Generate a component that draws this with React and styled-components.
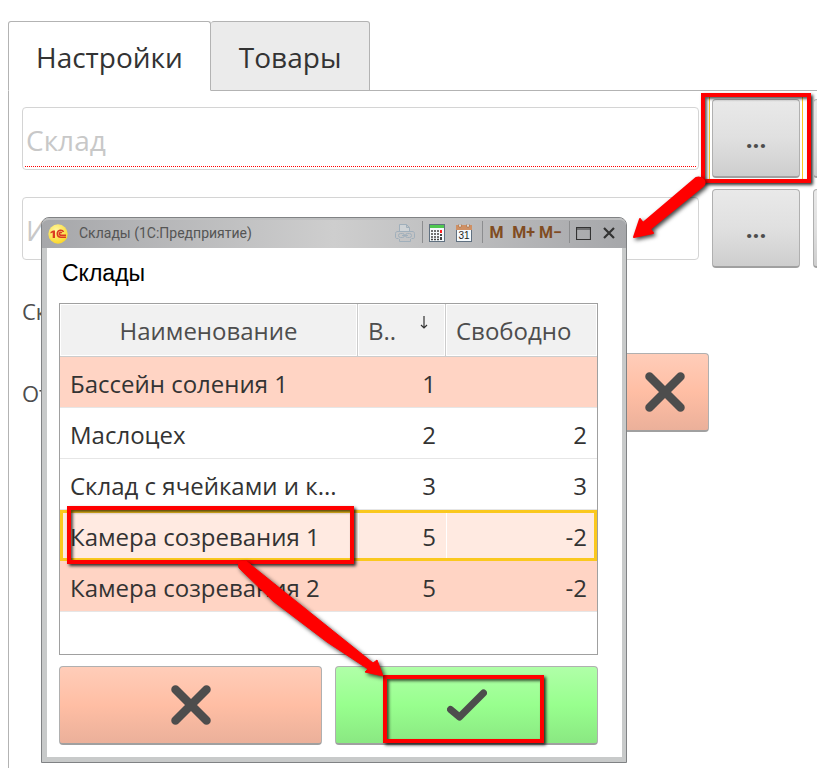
import React from "react";
import styled, { createGlobalStyle, css } from "styled-components";

const Global = createGlobalStyle`
  *, *::before, *::after { box-sizing: border-box; }
  body { margin: 0; background: #fff; color: #333; font-family: "Open Sans", "Noto Sans", sans-serif; }
  button, input { font: inherit; color: inherit; }
  button { padding: 0; cursor: pointer; }
`;

const Page = styled.main`
  position: relative;
  min-height: 100vh;
  padding: 21px 0 0 8px;
  display: flex;
  flex-direction: column;
  overflow: hidden;
`;

const Tabs = styled.div`
  display: flex;
  &::after {
    content: "";
    flex: 1;
    border-bottom: 1px solid #b3b3b3;
  }
`;

const Tab = styled.button`
  height: 70px;
  padding: 2px 27px 0;
  font-size: 28px;
  line-height: 38px;
  border: 1px solid #b3b3b3;
  border-radius: 3px 3px 0 0;
  background: #ebebeb;
  & + & {
    padding: 2px 28px 0;
    border-left: 0;
  }
  ${(p) => p.$active && css`
    background: #fff;
    border-bottom-color: #fff;
  `}
`;

const Panel = styled.section`
  flex: 1;
  display: flex;
  flex-direction: column;
  gap: 11px;
  padding: 8px 0 0 13px;
  border-left: 1px solid #b3b3b3;
`;

const FormRow = styled.div`
  display: flex;
  align-items: center;
  gap: 13px;
  min-height: ${(p) => (p.$compact ? 63 : 79)}px;
  margin-right: ${(p) => (p.$bleed ? -84 : 0)}px;
`;

const FieldFrame = styled.label`
  flex: 1;
  min-width: 0;
  height: 63px;
  padding: 3px 2px 2px;
  display: flex;
  border: 1px solid #d4d4d4;
  border-radius: 4px;
`;

const Field = styled.input`
  width: 100%;
  padding: 2px 0 0 1px;
  font-size: 28px;
  border: 0;
  border-bottom: 1px dotted ${(p) => (p.$required ? "#f00" : "transparent")};
  outline: 0;
  background: transparent;
  &::placeholder { color: #c8c8c8; opacity: 1; }
`;

const RowLabel = styled.span`
  flex: 1;
  font-size: 22px;
  line-height: 30px;
  color: #4d4d4d;
`;

const tones = {
  grey: "linear-gradient(#e9e9e9, #e0e0e0 50%, #cecece)",
  red: "linear-gradient(#ffcdb9, #ffbea4 50%, #ebb09a)",
  green: "linear-gradient(#b0ffa8, #98ff8e 50%, #8ae882)",
};

const Button = styled.button`
  position: relative;
  flex: ${(p) => (p.$fill ? "1" : "0 0 88px")};
  height: 79px;
  display: flex;
  align-items: center;
  justify-content: center;
  font-size: 24px;
  font-weight: 700;
  color: #4d4d4d;
  border: 1px solid #b0b0b0;
  border-bottom: 2px solid #a0a0a0;
  border-radius: 4px;
  background: ${(p) => tones[p.$tone || "grey"]};
  margin-right: ${(p) => (p.$inset ? 108 : 0)}px;
`;

const FocusEdges = styled.span`
  position: absolute;
  inset: -4px;
  border: solid #fac81e;
  border-width: 0 1px;
`;

const Highlight = styled.span`
  position: absolute;
  inset: ${(p) => p.$inset};
  border: 4px solid #f00;
  box-shadow: 2px 2px 3px rgba(0, 0, 0, 0.8), inset 2px 2px 3px rgba(0, 0, 0, 0.65);
  pointer-events: none;
`;

const Arrow = styled.svg`
  position: absolute;
  left: ${(p) => p.$left}px;
  top: ${(p) => p.$top}px;
  overflow: visible;
  pointer-events: none;
  filter: drop-shadow(2px 2px 2px rgba(0, 0, 0, 0.75));
`;

const Dialog = styled.section`
  position: absolute;
  left: 41px;
  top: 217px;
  width: 586px;
  border: 1px solid #808284;
  border-radius: 8px 8px 0 0;
  background: #c8caca;
  padding: 0 4px 5px 5px;
`;

const TitleBar = styled.header`
  height: 30px;
  margin: 0 -4px 0 -5px;
  padding: 0 5px 0 6px;
  display: flex;
  align-items: center;
  border-top: 2px solid #bfc0c1;
  border-radius: 7px 7px 0 0;
  background: linear-gradient(90deg, #a6a7aa, #cecece 50%, #a6a7aa);
`;

const Title = styled.h1`
  flex: 1;
  margin: 0 0 3px 11px;
  font: 14px/18px Roboto, "Liberation Sans", sans-serif;
  color: #555;
`;

const Tool = styled.button`
  width: ${(p) => p.$w || 27}px;
  height: 26px;
  display: flex;
  align-items: center;
  justify-content: center;
  border: 0;
  background: none;
  margin-bottom: 2px;
  font: 700 16px/20px Roboto, "Liberation Sans", sans-serif;
  color: #804c22;
`;

const Divider = styled.span`
  width: 1px;
  height: 22px;
  margin: 0 0 4px ${(p) => (p.$spaced ? 5 : 0)}px;
  background: #8c8d8f;
`;

const DialogBody = styled.div`
  padding: 11px 24px 12px 12px;
  background: #fff;
`;

const Heading = styled.h2`
  margin: 0 0 16px 3px;
  font: 23px/28px "Liberation Sans", Arial, sans-serif;
  color: #000;
`;

const TableFrame = styled.div`
  position: relative;
  height: 352px;
  border: 1px solid #a0a0a0;
`;

const Table = styled.table`
  width: 100%;
  table-layout: fixed;
  border-collapse: separate;
  border-spacing: 0;
  font-size: 24px;
  line-height: 34px;
`;

const Head = styled.th`
  position: relative;
  height: 53px;
  padding: 1px 10px 0;
  font-weight: 400;
  text-align: ${(p) => p.$align || "left"};
  color: #4d4d4d;
  background: #f1f1f1;
  border-right: 1px solid #ccc;
  border-bottom: 1px solid #ccc;
  box-shadow: inset 0 0 0 1px #fff;
  &:last-child { border-right: 0; }
`;

const SortIcon = styled.svg`
  position: absolute;
  right: 17px;
  top: 12px;
`;

const Cell = styled.td`
  height: 51px;
  padding: 3px 10px 0;
  text-align: ${(p) => (p.$num ? "right" : "left")};
  white-space: nowrap;
  overflow: hidden;
  text-overflow: ellipsis;
  border-bottom: 1px solid #e6e6e6;
`;

const Row = styled.tr`
  background: ${(p) => (p.$selected ? "#ffeae1" : p.$warn ? "#ffd4c4" : "#fff")};
  ${(p) => p.$selected && css`
    outline: 3px solid #fac81e;
    outline-offset: -3px;
    ${Cell} + ${Cell} { border-left: 1px solid #fff; }
  `}
`;

const Actions = styled.footer`
  display: flex;
  gap: 13px;
  margin-top: 11px;
`;

const Cross = () => (
  <svg width="40" height="40" viewBox="0 0 40 40" aria-hidden="true">
    <path d="M4.500 4.500 35.500 35.500M35.500 4.500 4.500 35.500" stroke="#4d4d4d" strokeWidth="8.500" strokeLinecap="round" />
  </svg>
);

const Check = () => (
  <svg width="40" height="32" viewBox="0 0 40 32" aria-hidden="true">
    <path d="M3.500 20.500 12.500 28 36.500 4" fill="none" stroke="#4d4d4d" strokeWidth="7" strokeLinecap="round" strokeLinejoin="round" />
  </svg>
);

const Logo = () => (
  <svg width="20" height="20" viewBox="0 0 20 20" aria-hidden="true">
    <defs>
      <radialGradient id="gold" cx="0.4" cy="0.3" r="0.7">
        <stop offset="0" stopColor="#fff7a0" />
        <stop offset="1" stopColor="#fbd72b" />
      </radialGradient>
    </defs>
    <circle cx="10" cy="10" r="9.700" fill="url(#gold)" />
    <path d="M2.500 8 5 6.500H7V14H4.700V8.500L2.500 9.500Z" fill="#dc3a20" />
    <path d="M15.500 8C14.500 5.500 9.500 5.500 9.300 9.500 9.300 12.500 11 13.200 13 13.200H18M13.800 9C12.500 7.800 11.400 8.500 11.400 9.800 11.400 11 12.300 11.300 13.300 11.300H18" fill="none" stroke="#dc3a20" strokeWidth="1.600" />
  </svg>
);

const Printer = () => (
  <svg width="20" height="20" viewBox="0 0 20 20" fill="none" stroke="#a0afbb" aria-hidden="true">
    <path d="M4.500 8V1.500H11.500L14.500 4.500V8M11.500 1.500V4.500H14.500" fill="#cfd3d6" />
    <path d="M3.500 15.500H2C1 15.500.500 15 .500 14V10.500C.500 9 1.500 8.500 3 8.500H17C18.500 8.500 19.500 9 19.500 10.500V14C19.500 15 19 15.500 18 15.500H16.500" />
    <rect x="3.500" y="10.500" width="6" height="4" rx="2" />
    <rect x="10.500" y="10.500" width="6" height="4" rx="2" />
    <path d="M7 12.500H13M4.500 16V18.500H15.500V16" />
  </svg>
);

const Calculator = () => (
  <svg width="16" height="18" viewBox="0 0 16 18" aria-hidden="true">
    <rect x=".5" y=".5" width="15" height="17" fill="#f5fafd" stroke="#607080" />
    <path d="M1 1H15V4H1Z" fill="#50c850" />
    <path d="M2 7H10M2 10H10M2 13H10M2 15.500H10" stroke="#444" strokeWidth="1.500" strokeDasharray="2 1" />
    <path d="M11 6H13V9H11Z" fill="#f22" />
    <path d="M11 10H13V12H11ZM11 13H13V16H11Z" fill="#444" />
  </svg>
);

const Calendar = () => (
  <svg width="16" height="18" viewBox="0 0 16 18" aria-hidden="true">
    <rect x=".5" y="1.500" width="15" height="16" fill="#f5fafd" stroke="#607080" />
    <path d="M0 1H16V6H0Z" fill="#cf9064" />
    <path d="M3 0H5V3H3ZM11 0H13V3H11Z" fill="#fff" stroke="#80583a" strokeWidth=".5" />
    <text x="8" y="15" fontSize="10" fontWeight="400" textAnchor="middle" fill="#222" fontFamily="Liberation Sans, sans-serif">31</text>
  </svg>
);

const rows = [
  { name: "Бассейн соления 1", order: 1, free: "", warn: true },
  { name: "Маслоцех", order: 2, free: 2 },
  { name: "Склад с ячейками и к...", order: 3, free: 3 },
  { name: "Камера созревания 1", order: 5, free: -2, selected: true },
  { name: "Камера созревания 2", order: 5, free: -2, warn: true },
];

function WarehouseDialog() {
  return (
    <Dialog role="dialog" aria-label="Склады">
      <TitleBar>
        <Logo />
        <Title>Склады (1С:Предприятие)</Title>
        <Tool $w={34} aria-label="Печать"><Printer /></Tool>
        <Divider />
        <Tool aria-label="Калькулятор"><Calculator /></Tool>
        <Tool aria-label="Календарь"><Calendar /></Tool>
        <Divider $spaced />
        <Tool>M</Tool>
        <Tool>M+</Tool>
        <Tool>M−</Tool>
        <Divider $spaced />
        <Tool aria-label="Развернуть">
          <svg width="15" height="13" viewBox="0 0 15 13"><path d="M.5.500H14.500V12.500H.500ZM0 2H15" fill="none" stroke="#333" strokeWidth="1.200" /></svg>
        </Tool>
        <Tool $w={24} aria-label="Закрыть">
          <svg width="12" height="12" viewBox="0 0 12 12"><path d="M1 1 11 11M11 1 1 11" stroke="#333" strokeWidth="2.200" /></svg>
        </Tool>
      </TitleBar>
      <DialogBody>
        <Heading>Склады</Heading>
        <TableFrame>
          <Table>
            <colgroup><col /><col width="88" /><col width="151" /></colgroup>
            <thead>
              <tr>
                <Head $align="center">Наименование</Head>
                <Head>
                  В..
                  <SortIcon width="8" height="14" viewBox="0 0 8 14"><path d="M4 0V12M1 9 4 12 7 9" fill="none" stroke="#333" strokeWidth="1.200" /></SortIcon>
                </Head>
                <Head>Свободно</Head>
              </tr>
            </thead>
            <tbody>
              {rows.map((r) => (
                <Row key={r.name} $warn={r.warn} $selected={r.selected}>
                  <Cell>{r.name}</Cell>
                  <Cell $num>{r.order}</Cell>
                  <Cell $num>{r.free}</Cell>
                </Row>
              ))}
            </tbody>
          </Table>
          <Highlight $inset="202px 243px 90px 7px" />
        </TableFrame>
        <Actions>
          <Button $fill $tone="red" aria-label="Отмена"><Cross /></Button>
          <Button $fill $tone="green" aria-label="Выбрать">
            <Check />
            <Highlight $inset="8px 53px 0 47px" />
          </Button>
        </Actions>
      </DialogBody>
    </Dialog>
  );
}

export default function App() {
  return (
    <>
      <Global />
      <Page>
        <Tabs role="tablist">
          <Tab role="tab" aria-selected="true" $active>Настройки</Tab>
          <Tab role="tab" aria-selected="false">Товары</Tab>
        </Tabs>
        <Panel>
          <FormRow $bleed>
            <FieldFrame><Field aria-label="Склад" placeholder="Склад" $required /></FieldFrame>
            <Button>...<FocusEdges /><Highlight $inset="-7px -12px -7px -12px" /></Button>
            <Button aria-label="Открыть" />
          </FormRow>
          <FormRow $bleed>
            <FieldFrame><Field aria-label="И" placeholder="И" /></FieldFrame>
            <Button>...</Button>
            <Button aria-label="Открыть" />
          </FormRow>
          <FormRow $compact><RowLabel>Ск</RowLabel></FormRow>
          <FormRow>
            <RowLabel>От</RowLabel>
            <Button $tone="red" $inset aria-label="Очистить"><Cross /></Button>
          </FormRow>
        </Panel>
        <WarehouseDialog />
        <Arrow $left={632} $top={178} width="74" height="62" viewBox="0 0 74 62">
          <path d="M64 0C70-2 75 4 71 8L18 51 21 55 2 59 8 41 11 45Z" fill="#f00" stroke="#f00" strokeWidth="2" strokeLinejoin="round" />
        </Arrow>
        <Arrow $left={234} $top={560} width="152" height="120" viewBox="0 0 152 120">
          <path d="M4 2 12 1 53 34 139 103 143 100 149 116 131 112 134 109 93 82 39 41 5 8Z" fill="#f00" stroke="#f00" strokeWidth="1" strokeLinejoin="round" />
        </Arrow>
      </Page>
    </>
  );
}
